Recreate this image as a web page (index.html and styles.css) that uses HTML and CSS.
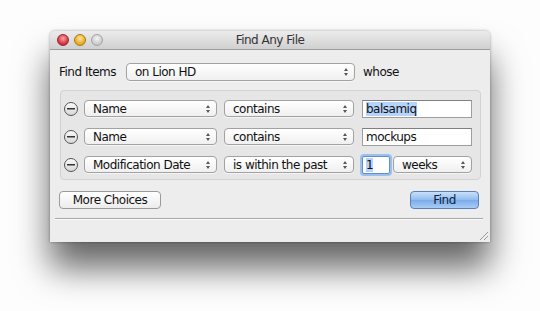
FILE: index.html
```html
<!DOCTYPE html>
<html lang="en">
<head>
    <meta charset="UTF-8">
    <title>Find Any File</title>
    <link rel="stylesheet" href="styles.css">
</head>
<body>
    <div class="window">
        <div class="titlebar">
            <div class="lights">
                <span class="light red"></span>
                <span class="light yellow"></span>
                <span class="light grey"></span>
            </div>
            <div class="title">Find Any File</div>
            <div></div>
        </div>

        <div class="content">
            <div class="find-row">
                <span class="label">Find Items</span>
                <div class="popup volume"><span>on Lion HD</span><i class="arrows"></i></div>
                <span class="label">whose</span>
            </div>

            <div class="criteria">
                <div class="rule">
                    <span class="minus"></span>
                    <div class="popup field"><span>Name</span><i class="arrows"></i></div>
                    <div class="popup op"><span>contains</span><i class="arrows"></i></div>
                    <div class="textfield value"><span class="selected">balsamiq</span></div>
                </div>
                <div class="rule">
                    <span class="minus"></span>
                    <div class="popup field"><span>Name</span><i class="arrows"></i></div>
                    <div class="popup op"><span>contains</span><i class="arrows"></i></div>
                    <div class="textfield value"><span>mockups</span></div>
                </div>
                <div class="rule">
                    <span class="minus"></span>
                    <div class="popup field"><span>Modification Date</span><i class="arrows"></i></div>
                    <div class="popup op"><span>is within the past</span><i class="arrows"></i></div>
                    <div class="textfield num focused"><span class="selected">1</span></div>
                    <div class="popup unit"><span>weeks</span><i class="arrows"></i></div>
                </div>
            </div>

            <div class="buttons">
                <button class="btn">More Choices</button>
                <button class="btn default">Find</button>
            </div>
            <div class="separator"></div>
        </div>

        <div class="grip"></div>
    </div>
</body>
</html>
```

FILE: styles.css
```css
body {
    margin: 0;
    width: 540px;
    height: 311px;
    background: #fdfdfd;
    font-family: "DejaVu Sans", "Liberation Sans", sans-serif;
    font-size: 12px;
    letter-spacing: -0.5px;
    color: #111;
    padding: 31px 0 0 50px;
    box-sizing: border-box;
    overflow: hidden;
}

.window {
    position: relative;
    width: 440px;
    height: 211px;
    background: #ededed;
    border-radius: 5px 5px 0 0;
    box-shadow: 0 26px 34px rgba(0, 0, 0, 0.6), 0 0 3px rgba(0, 0, 0, 0.35);
    display: flex;
    flex-direction: column;
}

.titlebar {
    height: 18px;
    display: grid;
    grid-template-columns: 1fr auto 1fr;
    align-items: center;
    background: linear-gradient(to bottom, #ececec, #d0d0d0);
    border-bottom: 1px solid #9c9c9c;
    border-radius: 5px 5px 0 0;
}

.lights {
    display: flex;
    gap: 5px;
    padding-left: 7px;
}

.light {
    width: 12px;
    height: 12px;
    border-radius: 50%;
    box-sizing: border-box;
}

.red {
    background: radial-gradient(circle at 50% 35%, #f6a2a6, #d32a38 70%);
    border: 1px solid #9e2330;
}

.yellow {
    background: radial-gradient(circle at 50% 35%, #fde49a, #e6a81b 70%);
    border: 1px solid #a9781a;
}

.grey {
    background: radial-gradient(circle at 50% 35%, #f4f4f4, #c9c9c9 70%);
    border: 1px solid #a3a3a3;
}

.title {
    font-size: 12px;
    color: #333;
}

.content {
    padding: 13px 7px 0 9px;
    display: flex;
    flex-direction: column;
}

.find-row {
    display: flex;
    align-items: center;
    gap: 8px;
    height: 18px;
}

.label {
    white-space: nowrap;
}

.popup {
    height: 17px;
    box-sizing: border-box;
    border: 1px solid #a2a2a2;
    border-radius: 4px;
    background: linear-gradient(to bottom, #ffffff, #f0f0f0);
    box-shadow: 0 1px 0 rgba(255, 255, 255, 0.6);
    display: flex;
    align-items: center;
    justify-content: space-between;
    padding: 0 6px 0 8px;
    white-space: nowrap;
}

.arrows {
    display: flex;
    flex-direction: column;
    gap: 2px;
}

.arrows::before,
.arrows::after {
    content: "";
    border-left: 2.5px solid transparent;
    border-right: 2.5px solid transparent;
}

.arrows::before {
    border-bottom: 3px solid #555;
}

.arrows::after {
    border-top: 3px solid #555;
}

.volume {
    width: 229px;
    height: 18px;
    margin-left: 2px;
}

.criteria {
    margin-top: 9px;
    margin-left: 1px;
    width: 421px;
    height: 90px;
    box-sizing: border-box;
    border: 1px solid #d2d2d2;
    border-radius: 4px;
    background: #e6e6e6;
    display: flex;
    flex-direction: column;
    gap: 11px;
    padding: 9px 0 0 3px;
}

.rule {
    display: flex;
    align-items: center;
    height: 17px;
}

.minus {
    width: 14px;
    height: 14px;
    box-sizing: border-box;
    border: 1px solid #555;
    border-radius: 50%;
    background: linear-gradient(#333, #333) center / 8px 1.5px no-repeat,
        linear-gradient(to bottom, #fafafa, #d8d8d8);
    margin-right: 6px;
}

.field {
    width: 133px;
    margin-right: 7px;
}

.op {
    width: 130px;
    margin-right: 8px;
}

.textfield {
    height: 18px;
    box-sizing: border-box;
    border: 1px solid #9e9e9e;
    border-top-color: #7f7f7f;
    background: #fff;
    display: flex;
    align-items: center;
    padding-left: 3px;
}

.value {
    width: 110px;
}

.num {
    width: 28px;
    margin-right: 3px;
}

.focused {
    border: 1px solid #5f8fd0;
    box-shadow: 0 0 0 2px #9cc0ee;
    border-radius: 2px;
}

.selected {
    background: #b5d3fb;
}

.unit {
    width: 79px;
}

.buttons {
    margin-top: 11px;
    display: flex;
    justify-content: space-between;
    padding-right: 4px;
}

.btn {
    height: 18px;
    box-sizing: border-box;
    border: 1px solid #9a9a9a;
    border-radius: 4px;
    background: linear-gradient(to bottom, #ffffff, #ececec);
    font-family: "DejaVu Sans", "Liberation Sans", sans-serif;
    font-size: 12px;
    letter-spacing: -0.5px;
    color: #111;
    padding: 0;
    width: 102px;
}

.default {
    width: 69px;
    border-color: #5b80b6;
    background: linear-gradient(to bottom, #c9e0fa, #8fbbee 50%, #7aabea 51%, #a8cdf6);
    color: #0e2240;
}

.separator {
    margin: 9px 0 0 -4px;
    width: 428px;
    height: 1px;
    background: #a8a8a8;
    border-bottom: 1px solid #fafafa;
}

.grip {
    position: absolute;
    right: 2px;
    bottom: 2px;
    width: 10px;
    height: 10px;
    background: repeating-linear-gradient(135deg, transparent 0 2px, #9a9a9a 2px 3px);
    clip-path: polygon(100% 0, 100% 100%, 0 100%);
}
```
